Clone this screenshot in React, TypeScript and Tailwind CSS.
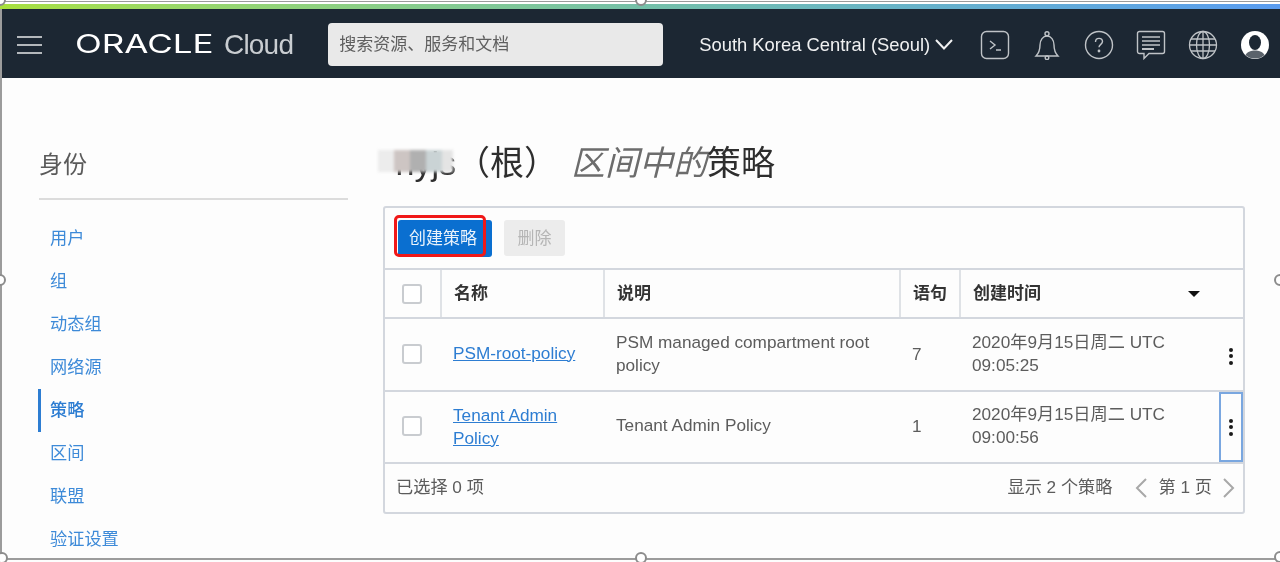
import React from "react";

const cjk = "font-['Liberation_Sans','Noto_Sans_CJK_SC',sans-serif]";
const cols = "grid-cols-[55px_163px_296px_60px_1fr]";

function Checkbox() {
  return <span className="block h-[20px] w-[20px] rounded-[3px] border-2 border-[#c9ccd0] bg-white" />;
}

function Kebab({ focus }: { focus?: boolean }) {
  return (
    <div className={`flex w-[24px] flex-col items-center justify-center gap-[2.5px] ${focus ? "h-[70px] border-2 border-[#7aa7e0]" : "mt-[2px] h-[70px]"}`}>
      <span className="h-[4px] w-[4px] rounded-full bg-[#1a1a1a]" />
      <span className="h-[4px] w-[4px] rounded-full bg-[#1a1a1a]" />
      <span className="h-[4px] w-[4px] rounded-full bg-[#1a1a1a]" />
    </div>
  );
}

function Handle({ className }: { className: string }) {
  return <span className={`absolute h-[12px] w-[12px] rounded-full border-2 border-[#8c8c8c] bg-white ${className}`} />;
}

const nav = ["用户", "组", "动态组", "网络源", "策略", "区间", "联盟", "验证设置"];

function TopIcons() {
  return (
    <div className="ml-[27px] flex items-center gap-[22px] text-[#bfc3c7]">
      <svg width="30" height="30" viewBox="0 0 30 30" fill="none" stroke="currentColor" strokeWidth="1.4">
        <rect x="1.500" y="1.500" width="27" height="27" rx="5" />
        <path d="M10 11l5 4-5 4M16 20h5" />
      </svg>
      <svg width="30" height="30" viewBox="0 0 30 30" fill="none" stroke="currentColor" strokeWidth="1.4">
        <path d="M4 26c3-3 4-6 4-11 0-5 3-9 7-9s7 4 7 9c0 5 1 8 4 11z" />
        <circle cx="15" cy="3.800" r="2" />
        <circle cx="15" cy="27.800" r="1.800" />
      </svg>
      <svg width="30" height="30" viewBox="0 0 30 30" fill="none" stroke="currentColor" strokeWidth="1.4">
        <circle cx="15" cy="15" r="13.500" />
        <path d="M11.500 12c0-2.200 1.500-3.600 3.500-3.600s3.500 1.400 3.500 3.200c0 2.600-3.500 3-3.500 5.700" />
        <circle cx="15" cy="21" r="0.700" fill="currentColor" />
      </svg>
      <svg width="30" height="30" viewBox="0 0 30 30" fill="none" stroke="currentColor" strokeWidth="1.4">
        <path d="M3.500 1.500h23a2 2 0 0 1 2 2v18a2 2 0 0 1-2 2H13l-5 5v-5H3.500a2 2 0 0 1-2-2v-18a2 2 0 0 1 2-2z" />
        <path d="M6 7h18M6 11h18M6 15h18" />
        <path d="M6 19h12" strokeWidth="2" />
      </svg>
      <svg width="30" height="30" viewBox="0 0 30 30" fill="none" stroke="currentColor" strokeWidth="1.3">
        <circle cx="15" cy="15" r="13.500" />
        <ellipse cx="15" cy="15" rx="6.500" ry="13.500" />
        <path d="M15 1.500v27M3 9h24M1.500 15h27M3 21h24" />
      </svg>
      <svg width="30" height="30" viewBox="0 0 30 30">
        <circle cx="15" cy="15" r="14" fill="#ffffff" />
        <ellipse cx="15" cy="12.500" rx="6" ry="7.500" fill="#1c2733" />
        <path d="M5.500 25c2-3.500 6-4.500 9.500-4.500s7.500 1 9.500 4.500c-2.500 2.500-5.500 3.500-9.500 3.500s-7-1-9.500-3.500z" fill="#5a626b" />
      </svg>
    </div>
  );
}

export default function App() {
  return (
    <div className={`relative flex h-[562px] w-[1280px] flex-col overflow-hidden bg-[#fdfdfd] blur-[0.4px] ${cjk}`}>
      <div className="mt-[1px] h-[3px] shrink-0 border-t border-[#9a9a9a] bg-white" />
      <div className="h-[5px] shrink-0 bg-gradient-to-r from-[#a8e03c] via-[#74c0a8] to-[#5a9cf0]" />
      <header className="flex h-[69px] shrink-0 items-center border-l-2 border-[#9c9c9c] bg-[#1c2733] pl-[15px] pt-[2px]">
        <div className="flex w-[25px] flex-col gap-[6px]">
          <span className="h-[2px] bg-[#b4b8bc]" />
          <span className="h-[2px] bg-[#b4b8bc]" />
          <span className="h-[2px] bg-[#b4b8bc]" />
        </div>
        <span className="ml-[33px] w-[141px] origin-left font-['Inter'] text-[25px] font-normal leading-none text-white [transform:scaleX(1.4)]">ORACLE</span>
        <span className="ml-[8px] font-['Liberation_Sans'] text-[28px] leading-none tracking-[-0.8px] text-[#c9cdd1]">Cloud</span>
        <div className="ml-[35px] flex h-[43px] w-[335px] items-center rounded-[4px] bg-[#e9e9e9] pl-[11px] text-[17px] text-[#5f5f5f]">搜索资源、服务和文档</div>
        <span className="ml-[36px] text-[18.400px] text-[#f0f1f2]">South Korea Central (Seoul)</span>
        <svg width="18" height="11" viewBox="0 0 18 11" fill="none" stroke="#f0f1f2" strokeWidth="2" className="ml-[5px]">
          <path d="M1 1l8 8.500 8-8.500" />
        </svg>
        <TopIcons />
      </header>
      <div className="mb-[2px] flex min-h-0 flex-1 border-b-2 border-l-2 border-[#9c9c9c]">
        <aside className="ml-[37px] w-[309px] shrink-0 pt-[71px]">
          <div className="h-[51px] border-b-2 border-[#dcdcdc] text-[24px] leading-[32px] text-[#5a5a5a]">身份</div>
          <nav className="mt-[17px] flex flex-col">
            {nav.map((n) => (
              <div key={n} className={`flex h-[43px] items-center text-[17.200px] ${n === "策略" ? "ml-[-1px] border-l-[3px] border-[#2d7dd2] pl-[9px] font-medium text-[#2d7dd2]" : "pl-[11px] text-[#3d8ad8]"}`}>
                {n}
              </div>
            ))}
          </nav>
        </aside>
        <main className="ml-[35px] w-[862px] shrink-0">
          <div className="flex h-[128px] items-start pt-[63px] text-[34px] leading-[44px] text-[#2e2e2e]">
            <span className="relative w-[73px] text-right">
              nyjs
              <span className="absolute left-[-5px] top-[9px] flex h-[22px] blur-[1.500px]">
                <span className="w-[16px] bg-[#ececec]" />
                <span className="w-[16px] bg-[#cdc5c3]" />
                <span className="w-[16px] bg-[#b0b0b0]" />
                <span className="w-[16px] bg-[#cad3d5]" />
                <span className="w-[11px] bg-[#e4e4e4]" />
              </span>
            </span>
            <span>（根）</span>
            <span className="ml-[13px] italic text-[#6c6c6c]">区间中的</span>
            <span>策略</span>
          </div>
          <section className="flex h-[308px] flex-col rounded-[3px] border-2 border-[#d3d7de]">
            <div className="flex h-[62px] items-center gap-[12px] border-b-2 border-[#d3d7de] pl-[13px]">
              <button className="relative flex h-[37px] w-[94px] items-center rounded-[3px] bg-[#0a6fd0] pl-[11px] pt-[1px] text-[17px] text-[#eaf3fb]">
                创建策略
                <span className="absolute left-[-4px] top-[-5px] h-[42px] w-[92px] rounded-[5px] border-[3px] border-[#f01818]" />
              </button>
              <button className="flex h-[36px] w-[61px] items-center justify-center rounded-[3px] bg-[#ececec] pt-[1px] text-[17px] text-[#b5b5b5]">删除</button>
            </div>
            <div className={`grid h-[49px] ${cols} items-stretch border-b-2 border-[#d3d7de] text-[17px] font-bold text-[#333333]`}>
              <div className="flex items-center justify-center pr-[1px]"><Checkbox /></div>
              <div className="flex items-center border-l-2 border-[#dfe2e6] pl-[12px]">名称</div>
              <div className="flex items-center border-l-2 border-[#dfe2e6] pl-[12px]">说明</div>
              <div className="flex items-center border-l-2 border-[#dfe2e6] pl-[12px]">语句</div>
              <div className="flex items-center justify-between border-l-2 border-[#dfe2e6] pl-[12px] pr-[43px]">
                创建时间
                <span className="h-0 w-0 border-x-[6px] border-t-[6px] border-x-transparent border-t-[#111111]" />
              </div>
            </div>
            <div className={`grid h-[73px] ${cols} items-center border-b-2 border-[#d3d7de] text-[17.200px] leading-[23px] text-[#5c5c5c]`}>
              <div className="flex justify-center pb-[3px] pr-[1px]"><Checkbox /></div>
              <div className="pb-[4px] pl-[13px]"><a className="text-[#2d7dd2] underline">PSM-root-policy</a></div>
              <div className="pb-[2px] pl-[13px]">PSM managed compartment root policy</div>
              <div className="pb-[2px] pl-[13px]">7</div>
              <div className="flex items-center justify-between pl-[13px]">
                <span className="pb-[2px]">2020年9月15日周二 UTC<br />09:05:25</span>
                <Kebab />
              </div>
            </div>
            <div className={`grid h-[72px] ${cols} items-center border-b-2 border-[#d3d7de] text-[17.200px] leading-[23px] text-[#5c5c5c]`}>
              <div className="flex justify-center pb-[2px] pr-[1px]"><Checkbox /></div>
              <div className="pl-[13px]"><a className="text-[#2d7dd2] underline">Tenant Admin<br />Policy</a></div>
              <div className="pb-[3px] pl-[13px]">Tenant Admin Policy</div>
              <div className="pb-[2px] pl-[13px]">1</div>
              <div className="flex items-center justify-between pl-[13px]">
                <span className="pb-[2px]">2020年9月15日周二 UTC<br />09:00:56</span>
                <Kebab focus />
              </div>
            </div>
            <div className="flex flex-1 items-center justify-between pl-[11px] pr-[8px] text-[17.200px] text-[#5c5c5c]">
              <span>已选择 0 项</span>
              <div className="flex items-center">
                <span>显示 2 个策略</span>
                <svg width="12" height="20" viewBox="0 0 12 20" fill="none" stroke="#a8a8a8" strokeWidth="2" className="ml-[22px]"><path d="M11 1L2 10l9 9" /></svg>
                <span className="ml-[12px]">第 1 页</span>
                <svg width="12" height="20" viewBox="0 0 12 20" fill="none" stroke="#a8a8a8" strokeWidth="2" className="ml-[11px]"><path d="M1 1l9 9-9 9" /></svg>
              </div>
            </div>
          </section>
        </main>
      </div>
      <Handle className="left-[-6px] top-[-6px]" />
      <Handle className="left-[635px] top-[-6px]" />
      <Handle className="left-[635px] top-[552px]" />
      <Handle className="left-[1274px] top-[274px]" />
      <Handle className="left-[-6px] top-[274px]" />
      <Handle className="left-[-4px] top-[552px]" />
      <Handle className="left-[1274px] top-[551px]" />
    </div>
  );
}
